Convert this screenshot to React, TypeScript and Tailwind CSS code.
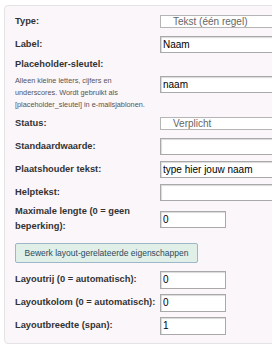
import React from 'react';

const labelCls = 'text-[9.3px] font-bold leading-[15px] text-[#333]';
const inputCls =
  'h-[17px] border border-[#a9a9a9] bg-white px-[2px] text-[10px] leading-none text-black shadow-[inset_1px_1px_1px_rgba(0,0,0,0.15)] outline-none';
const selectCls =
  'h-[13px] w-[140px] border border-[#b5b5b5] bg-white pl-[12px] text-[10px] leading-[11px] text-[#666]';

function Row({ label, children, h = 'h-[23px]' }: { label: React.ReactNode; children: React.ReactNode; h?: string }) {
  return (
    <div className={`grid grid-cols-[145px_1fr] items-center ${h}`}>
      <div className={labelCls}>{label}</div>
      <div className="flex">{children}</div>
    </div>
  );
}

export default function App() {
  return (
    <div className="h-[345px] w-[272px] overflow-hidden bg-white" style={{ fontFamily: '"Liberation Sans", Arial, sans-serif' }}>
      <div className="ml-[4px] mt-[5px] w-[320px] rounded-[4px] border border-[#e4e4e4] bg-[#fbf6fa] pb-[6px] pl-[10px] pt-[4px]">
        <Row label="Type:">
          <div className={selectCls}>Tekst (één regel)</div>
        </Row>
        <Row label="Label:">
          <input className={`${inputCls} w-[140px]`} defaultValue="Naam" />
        </Row>
        <Row
          h="h-[56px]"
          label={
            <div>
              <div>Placeholder-sleutel:</div>
              <div className="mt-[3px] text-[7.3px] font-normal leading-[12px] text-[#555]">
                Alleen kleine letters, cijfers en
                <br />
                underscores. Wordt gebruikt als
                <br />
                [placeholder_sleutel] in e-mailsjablonen.
              </div>
            </div>
          }
        >
          <input className={`${inputCls} w-[140px]`} defaultValue="naam" />
        </Row>
        <Row label="Status:">
          <div className={selectCls}>Verplicht</div>
        </Row>
        <Row label="Standaardwaarde:">
          <input className={`${inputCls} w-[140px]`} defaultValue="" />
        </Row>
        <Row label="Plaatshouder tekst:">
          <input className={`${inputCls} w-[140px]`} defaultValue="type hier jouw naam" />
        </Row>
        <Row label="Helptekst:">
          <input className={`${inputCls} w-[140px]`} defaultValue="" />
        </Row>
        <Row
          h="h-[30px]"
          label={
            <div className="pr-[8px]">Maximale lengte (0 = geen beperking):</div>
          }
        >
          <input className={`${inputCls} w-[66px]`} defaultValue="0" />
        </Row>
        <div className="pt-[5px] pb-[5px]">
          <button className="h-[20px] w-[183px] rounded-[2px] border border-[#9db6c8] bg-[#e0efe8] text-[8.5px] text-[#2c4a5f]">
            Bewerk layout-gerelateerde eigenschappen
          </button>
        </div>
        <Row label="Layoutrij (0 = automatisch):">
          <input className={`${inputCls} h-[18px] w-[66px]`} defaultValue="0" />
        </Row>
        <Row label="Layoutkolom (0 = automatisch):">
          <input className={`${inputCls} h-[18px] w-[66px]`} defaultValue="0" />
        </Row>
        <Row label="Layoutbreedte (span):">
          <input className={`${inputCls} h-[18px] w-[66px]`} defaultValue="1" />
        </Row>
      </div>
    </div>
  );
}
